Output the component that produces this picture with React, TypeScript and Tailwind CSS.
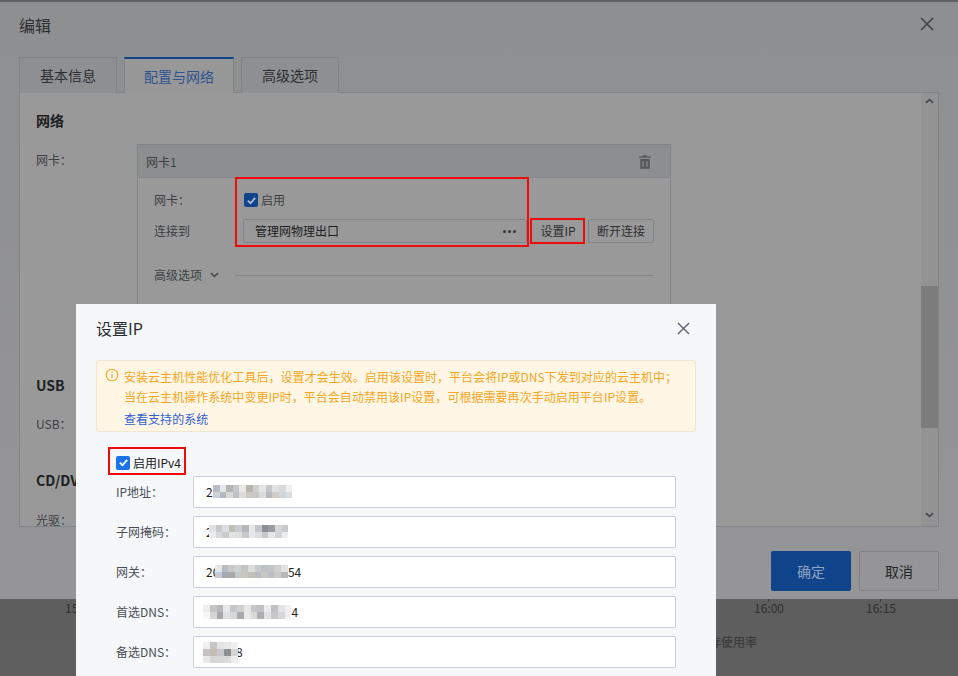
const ipRows = [
  ["#b9bcc0", "#e6e7e9", "#b3b4b4", "#c4c8cc", "#e8e8e6", "#b5b5b2", "#d0d0ce", "#e4e5e6", "#c5c8cb", "#e0e2e4", "#d8d9db", "#f0f0f0"],
  ["#cfd1d4", "#b2b8c0", "#d8d8d6", "#bcc2c8", "#dcdcdc", "#cdc8c2", "#c6c8c8", "#dadbdc", "#b6bbc0", "#d2ccc8", "#d0d6da", "#d8dde0"],
];
const maskRows = [
  ["#e0e2e4", "#c6c8ca", "#dcdde0", "#c0bcb6", "#c9ccce", "#b4b8bc", "#e8e8e6", "#c4c6c8", "#8c9096", "#9a9ca0", "#d4d6d8", "#c8cacc"],
  ["#eceded", "#d6d8da", "#c8cacb", "#e0e2e2", "#dcdee0", "#c8cac8", "#e8e8ea", "#dcdedf", "#c6c8ca", "#e6e6e8", "#d2d4d6", "#eeeeef"],
];
const gwRows = [
  ["#e4e6e8", "#b8bcc2", "#c8c8c6", "#cfd2d4", "#c4c4c2", "#dcdcda", "#c8c9ca", "#bfc2c4", "#c2c4c6", "#cfcfcf", "#e2e2e2"],
  ["#c8ccd2", "#a4a8b2", "#aaa8a4", "#c6c8ca", "#c8c4be", "#c2c0ba", "#b8bcc2", "#c8c6c2", "#bcbfc2", "#cac8c4", "#b6b8ba"],
];
const dnsRows = [
  ["#eceded", "#c4c4c6", "#b8b8bc", "#e8e8ea", "#c4c6c8", "#cfcfd0", "#e6e6e6", "#c4c6c8", "#c2c2c4", "#ececec", "#c0c2c4", "#e4e4e4", "#f0f0f0"],
  ["#f6f6f6", "#d8d6d4", "#a8a8ac", "#dfe0e2", "#d8d8d8", "#a8aaae", "#e8e8e8", "#dcd8d6", "#acaeb2", "#e0e2e2", "#c8c8ca", "#d8d8da", "#f0f0f0"],
];
const dns2Rows = [
  ["#f0f0f0", "#c6c6c8", "#e2e2e2", "#e8e8e8", "#f0f0f0"],
  ["#c4c2c2", "#c4bcb0", "#c8c8ca", "#8e9298", "#d4d4d6"],
  ["#e8e8e8", "#d6d6d6", "#d8d8da", "#dcdcde", "#eeeeee"],
];

function Mosaic({ rows, size = 6.6, className = "" }: { rows: string[][]; size?: number; className?: string }) {
  const w = rows[0].length * size;
  const h = rows.length * size;
  return (
    <svg width={w} height={h} viewBox={`0 0 ${w} ${h}`} shapeRendering="crispEdges" className={`shrink-0 z-10 ${className}`}>
      {rows.map((row, y) =>
        row.map((c, x) => <rect key={`${x}-${y}`} x={x * size} y={y * size} width={size + 0.2} height={size + 0.2} fill={c} />)
      )}
    </svg>
  );
}

function CloseIcon({ className }: { className: string }) {
  return (
    <svg viewBox="0 0 14 14" className={className} fill="none" stroke="currentColor" strokeWidth="1.5">
      <path d="M1 1 13 13M13 1 1 13" />
    </svg>
  );
}

function Check({ className, tick = "#fff" }: { className: string; tick?: string }) {
  return (
    <span className={`flex items-center justify-center rounded-[2px] shrink-0 ${className}`}>
      <svg viewBox="0 0 12 12" className="w-[11px] h-[11px]" fill="none" stroke={tick} strokeWidth="2">
        <path d="M2 6.2 4.9 9 10 3.2" />
      </svg>
    </span>
  );
}

function Chevron({ up, className }: { up?: boolean; className: string }) {
  return (
    <svg viewBox="0 0 10 6" className={className} fill="none" stroke="currentColor" strokeWidth="1.8">
      <path d={up ? "M1 5 5 1.4 9 5" : "M1 1 5 4.6 9 1"} />
    </svg>
  );
}

function Field({ label, children }: { label: string; children: React.ReactNode }) {
  return (
    <div className="flex items-center h-[32px] mb-[8px]">
      <span className="w-[77px] shrink-0 text-[12px] text-[#4a4f57]">{label}</span>
      <div className="w-[483px] h-[32px] flex items-center pl-[12px] bg-white border border-[#c9ced8] rounded-[2px] text-[12px] text-[#222]">
        {children}
      </div>
    </div>
  );
}

export default function App() {
  return (
    <div className="relative w-[958px] h-[676px] overflow-hidden bg-gradient-to-b from-[#565656] to-[#5f5f5f] font-['Noto_Sans_CJK_SC','Liberation_Sans',sans-serif]">
      {/* edit dialog, dimmed */}
      <div className="h-[599px] border-t-2 border-[#5e6063] bg-gradient-to-b from-[#8e8f91] to-[#959597] flex flex-col">
        <div className="h-[55px] shrink-0 flex items-center justify-between pl-[19px] pr-[24px] pb-[10px]">
          <span className="text-[16px] text-[#2c2e31]">编辑</span>
          <CloseIcon className="w-[14px] h-[14px] mb-[2px] text-[#3f4144]" />
        </div>

        <div className="flex gap-[7px] pl-[19px] h-[35px] shrink-0 relative z-10">
          <div className="w-[98px] h-[36px] flex items-center justify-center bg-[#8e8f91] border border-b-0 border-[#7f8488] text-[14px] text-[#2c2e31]">基本信息</div>
          <div className="w-[110px] h-[36px] flex items-center justify-center bg-[#989898] border-t-2 border-x border-t-[#10448a] border-x-[#7f8488] text-[14px] text-[#2f5490]">配置与网络</div>
          <div className="w-[98px] h-[36px] flex items-center justify-center bg-[#8e8f91] border border-b-0 border-[#7f8488] text-[14px] text-[#2c2e31]">高级选项</div>
        </div>

        <div className="mx-[19px] h-[435px] shrink-0 border border-[#7f8488] bg-[#999999] flex overflow-hidden">
          <div className="flex-1 pl-[16px] pt-[17px] text-[12px] text-[#3c3f43]">
            <div className="h-[20px] leading-[20px] text-[14px] font-bold text-[#1c1e21]">网络</div>
            <div className="flex mt-[14px] h-[206px]">
              <span className="w-[101px] leading-[32px]">网卡：</span>
              <div className="w-[534px] h-[206px] border border-[#7f8488]">
                <div className="h-[33px] pl-[8px] pr-[19px] pt-[2px] flex items-center justify-between bg-[#8d8e90] border-b border-[#85888c]">
                  <span>网卡1</span>
                  <svg viewBox="0 0 14 16" className="w-[12px] h-[14px] text-[#55575a]" fill="currentColor">
                    <path d="M5 0h4v1.500h5V3H0V1.500h5zM1.500 4.500h11V16h-11zM4 7v6.500h1.500V7zM8.500 7v6.500H10V7z" fillRule="evenodd" />
                  </svg>
                </div>
                <div className="px-[16px]">
                  <div className="flex items-center h-[20px] mt-[12px]">
                    <span className="w-[90px]">网卡：</span>
                    <Check className="w-[14px] h-[14px] bg-[#10448a]" tick="#a8bcd4" />
                    <span className="ml-[3px]">启用</span>
                  </div>
                  <div className="flex items-center h-[24px] mt-[9px]">
                    <span className="w-[89px]">连接到</span>
                    <div className="w-[284px] h-[24px] pl-[11px] pr-[10px] flex items-center justify-between border border-[#7f8488] rounded-[2px] text-[#1c1e21]">
                      <span>管理网物理出口</span>
                      <span className="flex gap-[2px]">
                        <i className="w-[3px] h-[3px] rounded-full bg-[#36383b]" />
                        <i className="w-[3px] h-[3px] rounded-full bg-[#36383b]" />
                        <i className="w-[3px] h-[3px] rounded-full bg-[#36383b]" />
                      </span>
                    </div>
                    <div className="w-[52px] h-[24px] ml-[5px] flex items-center justify-center text-[#2c2e31]">设置IP</div>
                    <div className="w-[66px] h-[24px] ml-[4px] flex items-center justify-center border border-[#7f8488] rounded-[2px] text-[#2c2e31]">断开连接</div>
                  </div>
                  <div className="flex items-center h-[20px] mt-[22px]">
                    <span>高级选项</span>
                    <Chevron className="w-[9px] h-[6px] ml-[8px] text-[#4a4d50]" />
                    <div className="flex-1 h-px bg-[#83868a] ml-[16px]" />
                  </div>
                </div>
              </div>
            </div>
            <div className="h-[20px] leading-[20px] mt-[25px] text-[14px] font-bold text-[#1c1e21]">USB</div>
            <div className="h-[20px] leading-[20px] mt-[19px]">USB：</div>
            <div className="h-[20px] leading-[20px] mt-[36px] text-[14px] font-bold text-[#1c1e21]">CD/DVD</div>
            <div className="h-[20px] leading-[20px] mt-[20px]">光驱：</div>
          </div>
          <div className="w-[17px] shrink-0 bg-[#939393] flex flex-col items-center">
            <Chevron up className="w-[9px] h-[6px] mt-[5px] text-[#45474a]" />
            <div className="w-full h-[142px] mt-[182px] bg-[#7c7c7c]" />
            <Chevron className="w-[9px] h-[6px] mt-[84px] text-[#45474a]" />
          </div>
        </div>

        <div className="flex justify-end gap-[8px] pr-[19px] pt-[24px]">
          <div className="w-[80px] h-[40px] flex items-center justify-center rounded-[2px] bg-[#10448a] text-[14px] text-[#8fa3c0]">确定</div>
          <div className="w-[80px] h-[40px] flex items-center justify-center rounded-[2px] border border-[#7f8488] text-[14px] text-[#232527]">取消</div>
        </div>
      </div>

      {/* chart peeking out under the dialog */}
      <div className="flex pl-[65px] text-[12px] leading-[12px] text-[#2e2f31]">
        <span className="w-[689px] mt-[3px]">15:45</span>
        <span className="w-[112px] flex flex-col items-start">
          <i className="w-px h-[3px] ml-[14px] bg-[#3c3d3f]" />
          16:00
        </span>
        <span className="flex flex-col items-start">
          <i className="w-px h-[3px] ml-[14px] bg-[#3c3d3f]" />
          16:15
        </span>
      </div>
      <div className="pl-[697px] mt-[19px] text-[12px] leading-[18px] font-medium text-[#3a3b3d]">内存使用率</div>

      {/* red annotations */}
      <div className="absolute left-[235px] top-[177px] w-[294px] h-[70px] border-2 border-[#ee0b0b] z-20" />
      <div className="absolute left-[530px] top-[218px] w-[55px] h-[26px] border-2 border-[#ee0b0b] z-20" />

      {/* set IP dialog */}
      <div className="absolute left-[76px] top-[304px] w-[640px] h-[372px] bg-[#f6f7f9] z-30 px-[20px]">
        <div className="h-[48px] flex items-center justify-between pr-[6px]">
          <span className="text-[16px] text-[#2c2e33]">设置IP</span>
          <CloseIcon className="w-[13px] h-[13px] text-[#5c6673]" />
        </div>
        <div className="h-[72px] mt-[8px] border border-[#f1e6cf] bg-[#fff6e5] rounded-[2px] flex pl-[8px] pt-[6px] text-[12px] leading-[20px] text-[#f5a623]">
          <svg viewBox="0 0 14 14" className="w-[14px] h-[14px] mt-[1px] shrink-0" fill="none" stroke="currentColor" strokeWidth="1.100">
            <circle cx="7" cy="7" r="5.800" />
            <path d="M7 6v4M7 3.800v1.200" />
          </svg>
          <div className="ml-[5px] tracking-[0.04px]">
            <div>安装云主机性能优化工具后，设置才会生效。启用该设置时，平台会将IP或DNS下发到对应的云主机中；</div>
            <div>当在云主机操作系统中变更IP时，平台会自动禁用该IP设置，可根据需要再次手动启用平台IP设置。</div>
            <div className="mt-[2px] text-[#2f5fd0]">查看支持的系统</div>
          </div>
        </div>
        <div className="flex items-center h-[28px] w-[78px] ml-[12px] mt-[15px] pl-[6px] pt-[3px] border-2 border-[#ee0b0b] text-[12px] text-[#222]">
          <Check className="w-[14px] h-[14px] bg-[#1a73e8]" />
          <span className="ml-[3px] whitespace-nowrap">启用IPv4</span>
        </div>
        <div className="mt-px pl-[20px]">
          <Field label="IP地址：">
            <span>2</span>
            <Mosaic rows={ipRows} />
          </Field>
          <Field label="子网掩码：">
            <span>2</span>
            <Mosaic rows={maskRows} className="-ml-[4px]" />
          </Field>
          <Field label="网关：">
            <span>20</span>
            <Mosaic rows={gwRows} className="-ml-[4px]" />
            <span>54</span>
          </Field>
          <Field label="首选DNS：">
            <Mosaic rows={dnsRows} size={6.8} className="-ml-[3px]" />
            <span>4</span>
          </Field>
          <Field label="备选DNS：">
            <Mosaic rows={dns2Rows} size={7} className="-ml-[3px]" />
            <span className="-ml-[2px]">8</span>
          </Field>
        </div>
      </div>
    </div>
  );
}
